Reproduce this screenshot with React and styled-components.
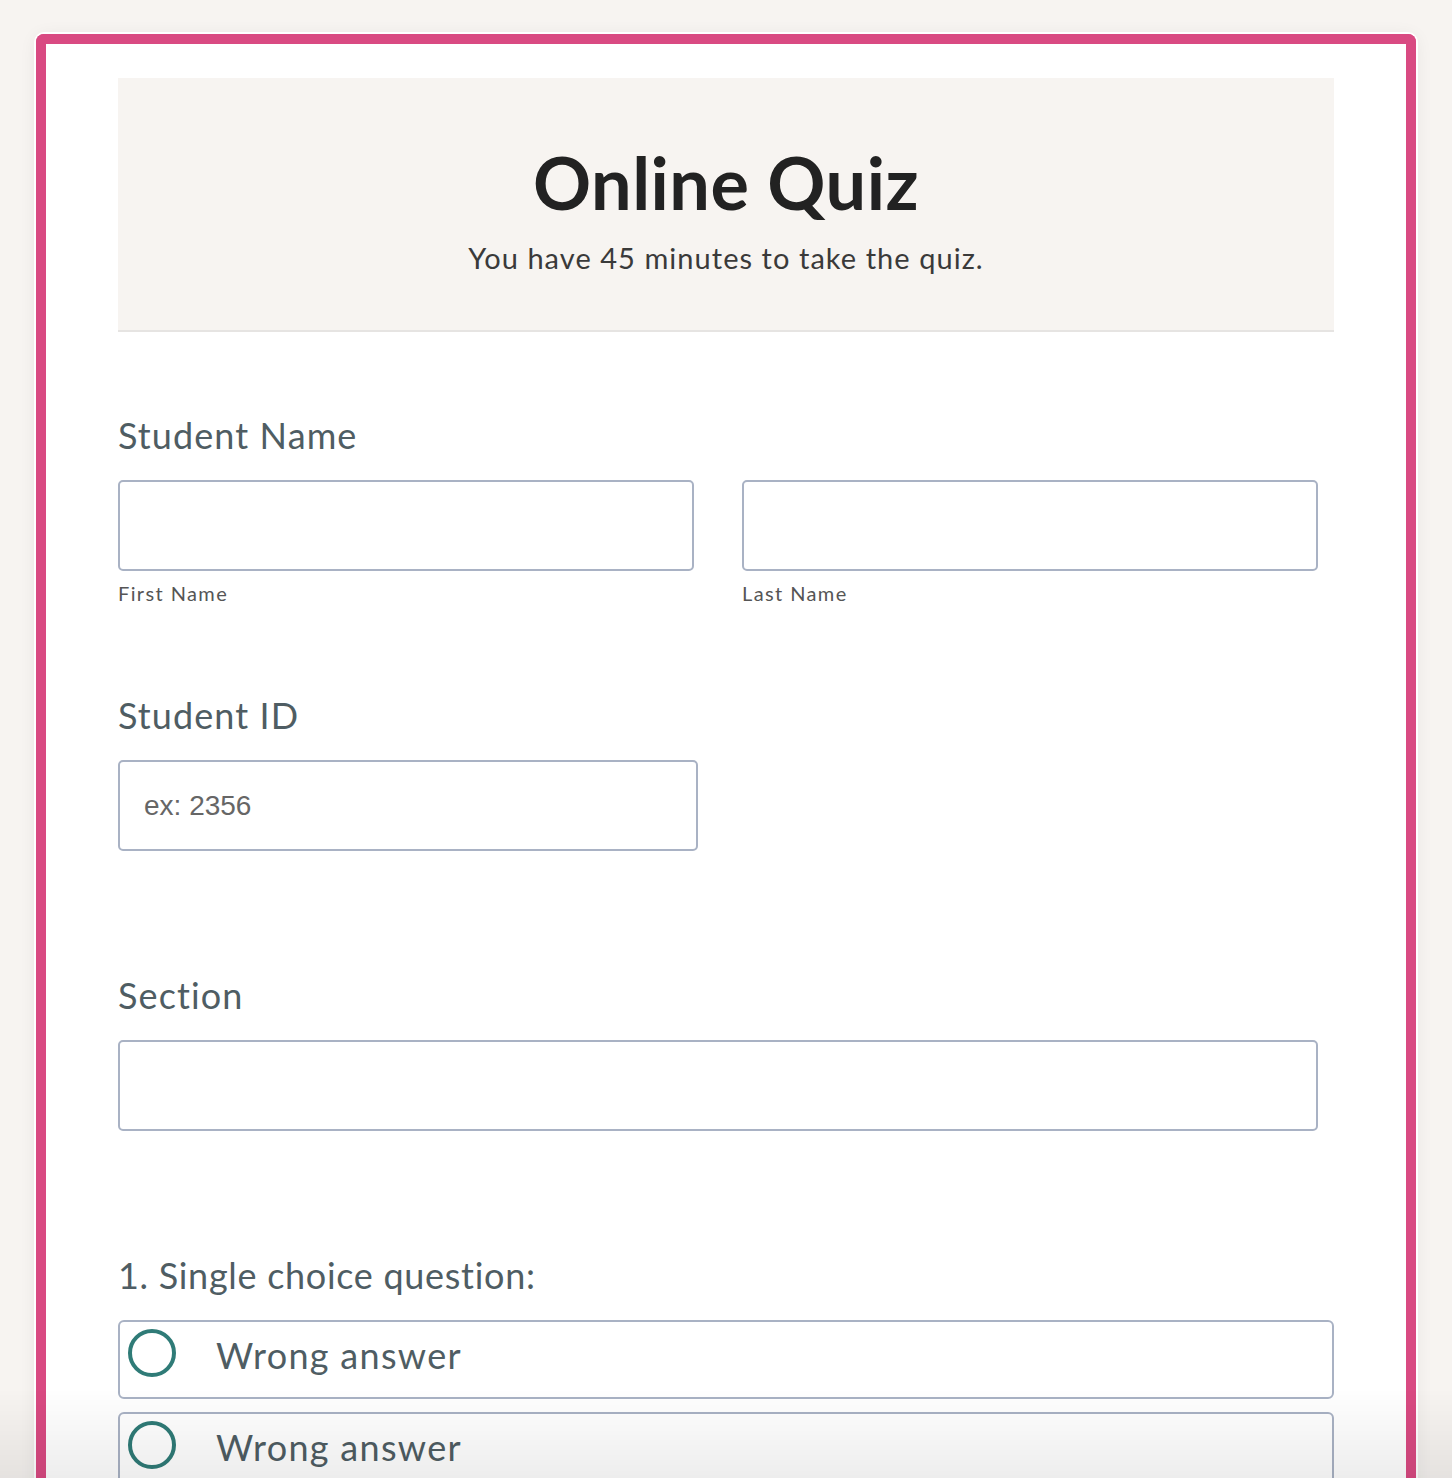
import React from "react";
import styled, { createGlobalStyle } from "styled-components";

const GlobalStyle = createGlobalStyle`
  html, body {
    margin: 0;
    padding: 0;
    background: #f7f4f1;
  }
  body {
    font-family: 'Lato', 'Noto Sans', sans-serif;
  }
`;

const Page = styled.div`
  padding: 34px 36px 0;
  min-height: 1478px;
  box-sizing: border-box;
`;

const Card = styled.div`
  background: #fff;
  border: 10px solid #d94a82;
  border-bottom: none;
  border-radius: 8px 8px 0 0;
  box-shadow: 0 0 0 2px #fff, 0 2px 18px rgba(0, 0, 0, 0.07);
  padding: 34px 72px 0;
  min-height: 1460px;
`;

const Header = styled.header`
  background: #f7f4f1;
  border-bottom: 2px solid #e6e4e2;
  height: 254px;
  display: flex;
  flex-direction: column;
  align-items: center;
  justify-content: center;
  padding-top: 10px;
  box-sizing: border-box;
`;

const Title = styled.h1`
  margin: 0;
  font-size: 72px;
  line-height: 80px;
  font-weight: 700;
  letter-spacing: 0.5px;
  color: #222;
`;

const Subtitle = styled.p`
  margin: 18px 0 0;
  font-size: 29px;
  line-height: 36px;
  letter-spacing: 1.05px;
  color: #3a3a3a;
`;

const Form = styled.form`
  padding-top: 81px;
`;

const Field = styled.div`
  min-height: ${(p) => (p.$last ? "auto" : "280px")};
  width: ${(p) => p.$width || "1200px"};
`;

const Label = styled.div`
  font-size: 36px;
  line-height: 44px;
  letter-spacing: ${(p) => p.$spacing || "1.1px"};
  color: #4f5d63;
  margin-bottom: 23px;
`;

const Row = styled.div`
  display: grid;
  grid-template-columns: 576px 576px;
  gap: 48px;
`;

const Input = styled.input`
  display: block;
  width: 100%;
  height: 91px;
  box-sizing: border-box;
  border: 2px solid #a9b2c4;
  border-radius: 5px;
  background: #fff;
  padding: 0 24px;
  font-family: 'Liberation Sans', Arial, sans-serif;
  font-size: 28px;
  color: #333;
  outline: none;
  &::placeholder {
    color: #666;
  }
`;

const SubLabel = styled.div`
  margin-top: 10px;
  font-size: 20px;
  line-height: 24px;
  color: #555;
  letter-spacing: 1.4px;
`;

const Options = styled.div`
  display: flex;
  flex-direction: column;
  gap: 13px;
  width: 1216px;
`;

const Option = styled.label`
  display: flex;
  align-items: flex-start;
  height: 79px;
  box-sizing: border-box;
  border: 2px solid #a9b2c4;
  border-radius: 6px;
  padding: 7px 0 0 8px;
  cursor: pointer;
`;

const Radio = styled.span`
  width: 48px;
  height: 48px;
  box-sizing: border-box;
  border: 4px solid #2f7b77;
  border-radius: 50%;
  flex-shrink: 0;
`;

const OptionText = styled.span`
  margin-left: 40px;
  font-size: 36px;
  line-height: 52px;
  letter-spacing: 1.3px;
  color: #4f5d63;
`;

const BottomFade = styled.div`
  position: fixed;
  left: 0;
  right: 0;
  bottom: 0;
  height: 90px;
  background: linear-gradient(to bottom, rgba(0, 0, 0, 0), rgba(0, 0, 0, 0.07));
  pointer-events: none;
`;

export default function App() {
  return (
    <>
      <GlobalStyle />
      <Page>
        <Card>
          <Header>
            <Title>Online Quiz</Title>
            <Subtitle>You have 45 minutes to take the quiz.</Subtitle>
          </Header>
          <Form onSubmit={(e) => e.preventDefault()}>
            <Field>
              <Label>Student Name</Label>
              <Row>
                <div>
                  <Input type="text" />
                  <SubLabel>First Name</SubLabel>
                </div>
                <div>
                  <Input type="text" />
                  <SubLabel>Last Name</SubLabel>
                </div>
              </Row>
            </Field>
            <Field $width="580px">
              <Label>Student ID</Label>
              <Input type="text" placeholder="ex: 2356" />
            </Field>
            <Field>
              <Label>Section</Label>
              <Input type="text" />
            </Field>
            <Field $last>
              <Label $spacing="0.7px">1. Single choice question:</Label>
              <Options>
                <Option>
                  <Radio />
                  <OptionText>Wrong answer</OptionText>
                </Option>
                <Option>
                  <Radio />
                  <OptionText>Wrong answer</OptionText>
                </Option>
                <Option>
                  <Radio />
                  <OptionText>Right answer</OptionText>
                </Option>
              </Options>
            </Field>
          </Form>
        </Card>
      </Page>
      <BottomFade />
    </>
  );
}
